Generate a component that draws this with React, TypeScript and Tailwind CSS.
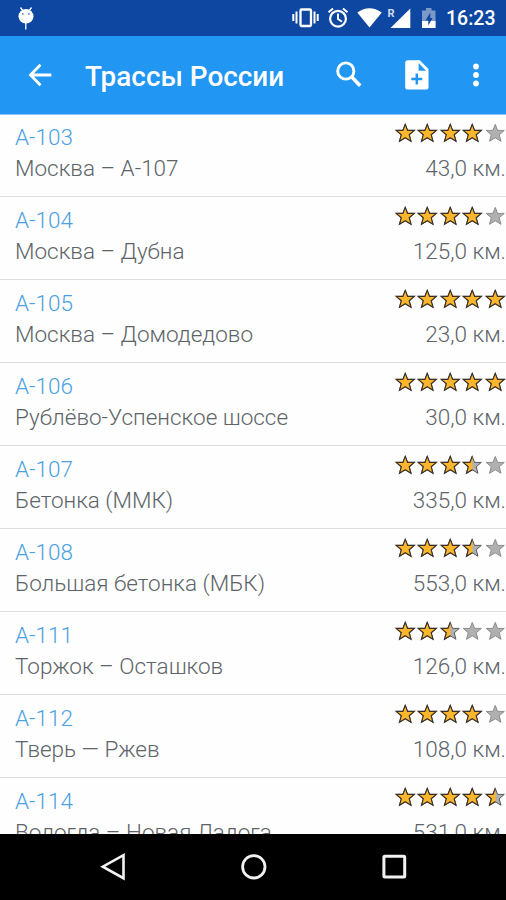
type Road = { code: string; name: string; km: string; rating: number };

const roads: Road[] = [
  { code: 'А-103', name: 'Москва – А-107', km: '43,0 км.', rating: 4 },
  { code: 'А-104', name: 'Москва – Дубна', km: '125,0 км.', rating: 4 },
  { code: 'А-105', name: 'Москва – Домодедово', km: '23,0 км.', rating: 5 },
  { code: 'А-106', name: 'Рублёво-Успенское шоссе', km: '30,0 км.', rating: 5 },
  { code: 'А-107', name: 'Бетонка (ММК)', km: '335,0 км.', rating: 3.5 },
  { code: 'А-108', name: 'Большая бетонка (МБК)', km: '553,0 км.', rating: 3.5 },
  { code: 'А-111', name: 'Торжок – Осташков', km: '126,0 км.', rating: 2.5 },
  { code: 'А-112', name: 'Тверь — Ржев', km: '108,0 км.', rating: 4 },
  { code: 'А-114', name: 'Вологда – Новая Ладога', km: '531,0 км.', rating: 4.5 },
];

const STAR = '11.25,1.4 13.6,7.4 20.3,7.4 15.2,11.8 17,18.3 11.25,14.8 5.500,18.3 7.3,11.8 2.2,7.4 8.9,7.4';

function Star({ fill }: { fill: number }) {
  return (
    <svg className="h-5 w-[22.5px] shrink-0" viewBox="0 0 22.5 20">
      <defs>
        <clipPath id="left-half">
          <rect width="11.5" height="20" />
        </clipPath>
      </defs>
      <polygon
        points={STAR}
        fill="#b0b0b0"
        stroke={fill > 0 ? '#555a60' : '#8c8c8c'}
        strokeWidth="1"
      />
      {fill > 0 && (
        <polygon
          points={STAR}
          fill="#fcb62c"
          stroke="#3b3128"
          strokeWidth="1.2"
          clipPath={fill < 1 ? 'url(#left-half)' : undefined}
        />
      )}
    </svg>
  );
}

function Row({ road }: { road: Road }) {
  return (
    <div className="flex h-[83px] shrink-0 justify-between border-b border-[#dcdcdc] pl-[15px]">
      <div className="flex flex-col pt-2 text-[22.5px] leading-[31px] font-light">
        <span className="text-[#4ba1e2]">{road.code}</span>
        <span className="whitespace-nowrap text-[#5c6468]">{road.name}</span>
      </div>
      <div className="flex flex-col items-end pt-[9px]">
        <div className="flex h-[30px]">
          {[0, 1, 2, 3, 4].map((i) => (
            <Star key={i} fill={Math.max(0, Math.min(1, road.rating - i))} />
          ))}
        </div>
        <span className="text-[22.5px] leading-[31px] font-light whitespace-nowrap text-[#5c6468]">{road.km}</span>
      </div>
    </div>
  );
}

function StatusBar() {
  return (
    <div className="flex h-9 shrink-0 items-center bg-[#0d47a1] text-white">
      <svg className="ml-4 h-9 w-5" viewBox="0 0 20 36" fill="none">
        <path d="M4.5 7.5 7 11M15.500 7.500 13 11M9.800 23v6.500" stroke="#fff" strokeWidth="1.300" />
        <ellipse cx="10" cy="16.300" rx="7.500" ry="7.300" fill="#fff" />
        <circle cx="6.800" cy="14" r="1" fill="#7190c4" />
        <circle cx="12.800" cy="14" r="1" fill="#7190c4" />
      </svg>
      <svg className="ml-auto h-9 w-[150px]" viewBox="290 0 150 36" fill="none">
        <rect x="300.500" y="9.500" width="10.500" height="16.500" rx="1" stroke="#fff" strokeWidth="2.300" />
        <path d="M296.500 11.500v12M293.300 14v7M314.500 11.500v12M317.700 14v7" stroke="#fff" strokeWidth="2" />
        <circle cx="338" cy="18.700" r="7.900" stroke="#fff" strokeWidth="2.200" />
        <path d="M338 13.500v5.600l4 2.600M328.500 12.200l4.500-3.800M347.500 12.200l-4.500-3.800" stroke="#fff" strokeWidth="1.900" />
        <path d="M357.300 12.600Q369.500 3.800 381.800 12.600L369.500 27.500Z" fill="#fff" />
        <path d="M410.300 8.500v19.500H390.500Z" fill="#fff" />
        <path d="M422 10.500h4v-2.500h5.500v2.500h4v17.500H422Z" fill="#7b98c9" />
        <path d="M422 21h13.500v7H422Z" fill="#fff" />
        <path d="M430.300 12.500 425.500 20.500h2.800v5l4.300-7.500h-2.300Z" fill="#0d47a1" />
        <text x="387.500" y="17" fill="#cfdbf0" fontFamily="Roboto, sans-serif" fontSize="11" fontWeight="700">R</text>
      </svg>
      <span className="mr-[11px] ml-[6px] w-[49px] pt-[2px] text-[19.5px] font-medium whitespace-nowrap">16:23</span>
    </div>
  );
}

function AppBar() {
  return (
    <header className="relative z-10 flex h-[79px] shrink-0 items-center border-b border-[#8cc5f8] bg-[#2196f3] text-white">
      <svg className="ml-6 h-8 w-8" viewBox="0 0 32 32" fill="none" stroke="#fff" strokeWidth="2.800">
        <path d="M27.300 16H7M16.500 5.800 6.500 16l10 10.200" />
      </svg>
      <h1 className="ml-[29px] pt-[3px] text-[27.9px] font-medium whitespace-nowrap">Трассы России</h1>
      <div className="ml-auto flex items-center">
        <svg className="h-9 w-9" viewBox="331 57 36 36" fill="none" stroke="#fff">
          <circle cx="345.800" cy="71" r="8.100" strokeWidth="2.900" />
          <path d="m351.800 77 8.400 8.700" strokeWidth="3.600" />
        </svg>
        <svg className="ml-8 h-9 w-9" viewBox="399 57 36 36">
          <path
            d="M407.800 60.300h12l8.700 8.700v18a2.600 2.600 0 0 1-2.600 2.600h-18.100a2.600 2.600 0 0 1-2.600-2.600V62.900a2.600 2.600 0 0 1 2.600-2.600Z"
            fill="#fff"
          />
          <path d="M418.600 63v7.700h7.400Z" fill="#2196f3" />
          <path d="M416.800 73.500v11M411.300 79h11" stroke="#2196f3" strokeWidth="2.500" />
        </svg>
        <svg className="mr-5 ml-[31px] h-9 w-5" viewBox="466 57 20 36" fill="#fff">
          <circle cx="476" cy="66.500" r="2.900" />
          <circle cx="476" cy="75" r="2.900" />
          <circle cx="476" cy="83.500" r="2.900" />
        </svg>
      </div>
    </header>
  );
}

function NavBar() {
  return (
    <nav className="flex h-[66px] shrink-0 items-center justify-center gap-[100px] bg-black">
      <svg className="h-10 w-10" viewBox="93 847 40 40" fill="none" stroke="#f2f2f2" strokeWidth="2.600">
        <path d="M123.500 855.200v23L102.800 866.700Z" />
      </svg>
      <svg className="h-10 w-10" viewBox="233 847 40 40" fill="none" stroke="#f2f2f2" strokeWidth="2.800">
        <circle cx="253.800" cy="866.800" r="11.200" />
      </svg>
      <svg className="h-10 w-10" viewBox="373 847 40 40" fill="none" stroke="#f2f2f2" strokeWidth="3">
        <rect x="383.900" y="856.300" width="20.800" height="20.800" rx="1" />
      </svg>
    </nav>
  );
}

export default function App() {
  return (
    <div className="flex h-[900px] w-[506px] flex-col overflow-hidden bg-white font-[Roboto,sans-serif]">
      <StatusBar />
      <AppBar />
      <main className="-mt-px flex min-h-0 flex-1 flex-col overflow-hidden bg-[#fefefe]">
        {roads.map((road) => (
          <Row key={road.code} road={road} />
        ))}
      </main>
      <NavBar />
    </div>
  );
}
